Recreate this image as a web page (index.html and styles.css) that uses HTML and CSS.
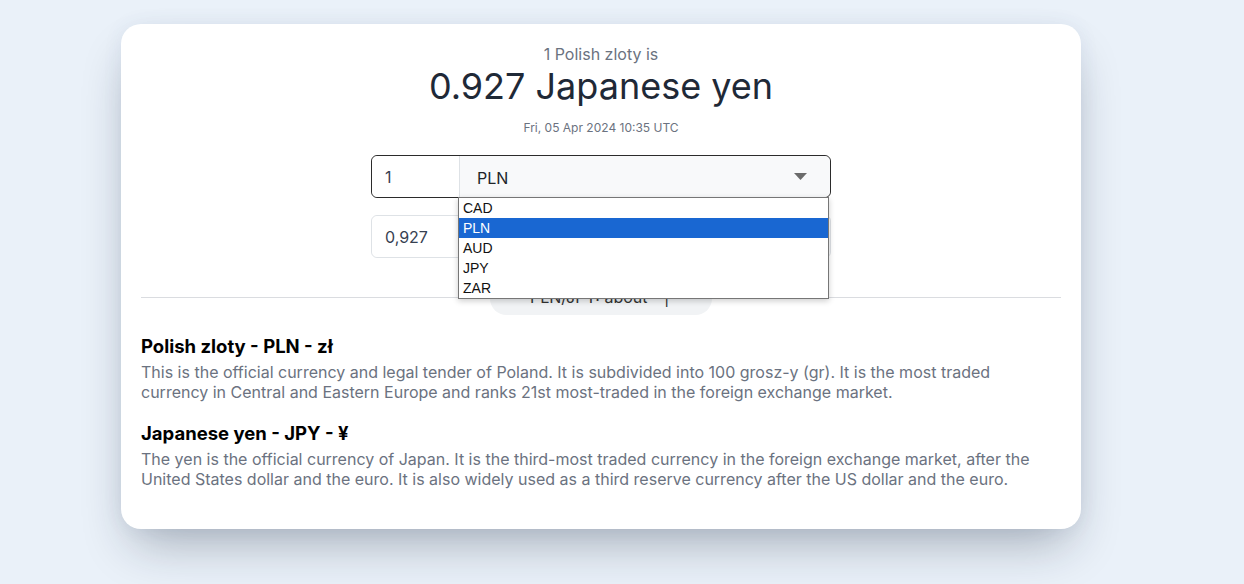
FILE: index.html
```html
<!DOCTYPE html>
<html lang="en">
<head>
<meta charset="utf-8">
<title>PLN to JPY</title>
<link rel="stylesheet" href="styles.css">
</head>
<body>
<div class="page">
  <div class="card">
    <div class="summary">
      <p class="lead">1 Polish zloty is</p>
      <h1 class="result">0.927 Japanese yen</h1>
      <p class="date">Fri, 05 Apr 2024 10:35 UTC</p>
    </div>
    <div class="converter">
      <div class="group group-active">
        <div class="amount">1</div>
        <div class="select">
          <span>PLN</span>
          <svg class="caret" width="13" height="7" viewBox="0 0 13 7"><path d="M0 0h13L6.5 7z" fill="#6b6b6b"/></svg>
        </div>
        <ul class="options">
          <li>CAD</li>
          <li class="selected">PLN</li>
          <li>AUD</li>
          <li>JPY</li>
          <li>ZAR</li>
        </ul>
      </div>
      <div class="group">
        <div class="amount">0,927</div>
        <div class="select">
          <span>JPY</span>
          <svg class="caret" width="13" height="7" viewBox="0 0 13 7"><path d="M0 0h13L6.5 7z" fill="#6b6b6b"/></svg>
        </div>
      </div>
    </div>
    <div class="divider">
      <div class="pill">PLN/JPY: about <span class="bar">|</span></div>
    </div>
    <section class="info">
      <h2>Polish zloty - PLN - zł</h2>
      <p>This is the official currency and legal tender of Poland. It is subdivided into 100 grosz-y (gr). It is the most traded currency in Central and Eastern Europe and ranks 21st most-traded in the foreign exchange market.</p>
      <h2 class="second">Japanese yen - JPY - ¥</h2>
      <p>The yen is the official currency of Japan. It is the third-most traded currency in the foreign exchange market, after the United States dollar and the euro. It is also widely used as a third reserve currency after the US dollar and the euro.</p>
    </section>
  </div>
</div>
</body>
</html>
```

FILE: styles.css
```css
* { box-sizing: border-box; }
html, body { margin: 0; padding: 0; }
body {
  background: #eaf1f9;
  font-family: Inter, "Noto Sans", sans-serif;
  color: #1f2937;
  width: 1244px;
  height: 584px;
  overflow: hidden;
}
.page {
  padding: 24px 0 0 121px;
}
.card {
  width: 960px;
  background: #fff;
  border-radius: 20px;
  padding: 18px 20px 40px;
  box-shadow: 0 25px 50px -12px rgba(20, 30, 50, 0.32), 0 0 20px rgba(60, 90, 140, 0.07);
}
.summary { text-align: center; }
.lead {
  margin: 0;
  font-size: 16px;
  line-height: 24px;
  color: #6b7280;
}
.result {
  margin: 0;
  font-size: 36px;
  line-height: 40px;
  font-weight: 400;
  color: #1f2937;
}
.date {
  margin: 14px 0 0;
  font-size: 12px;
  line-height: 16px;
  color: #6b7280;
}
.converter {
  margin: 19px auto 0;
  width: 460px;
  display: flex;
  flex-direction: column;
  gap: 17px;
}
.group {
  position: relative;
  display: flex;
  height: 43px;
  border: 1px solid #dee2e6;
  border-radius: 6px;
  font-size: 16px;
}
.group-active { border-color: #2b2b2b; }
.amount {
  width: 87px;
  padding-left: 13px;
  display: flex;
  align-items: center;
  color: #374151;
  background: #fff;
  border-radius: 6px 0 0 6px;
}
.select {
  flex: 1;
  display: flex;
  align-items: center;
  justify-content: space-between;
  padding: 2px 23px 0 17px;
  background: #f8f9fa;
  border-left: 1px solid #dee2e6;
  border-radius: 0 6px 6px 0;
  color: #212529;
}
.caret { margin-top: -2px; }
.options {
  position: absolute;
  left: 86px;
  top: 41px;
  width: 371px;
  margin: 0;
  padding: 0;
  list-style: none;
  background: #fff;
  border: 1px solid #767676;
  box-shadow: 0 2px 6px rgba(0, 0, 0, 0.2);
  font-family: "Liberation Sans", Arial, sans-serif;
  font-size: 14px;
  z-index: 5;
}
.options li {
  height: 20px;
  line-height: 20px;
  padding-left: 4px;
  color: #111;
}
.options li.selected {
  background: #1967d2;
  color: #fff;
}
.divider {
  position: relative;
  margin-top: 39px;
  border-top: 1px solid #dadce0;
  height: 0;
}
.pill {
  position: absolute;
  left: 349px;
  top: -16px;
  width: 222px;
  height: 33px;
  border-radius: 17px;
  background: #f1f3f5;
  font-size: 16px;
  line-height: 31px;
  padding-left: 40px;
  color: #333;
}
.pill .bar { margin-left: 12px; }
.info { margin-top: 36px; }
.info h2 {
  margin: 0;
  font-size: 18.5px;
  line-height: 24px;
  font-weight: 700;
  color: #000;
}
.info h2.second { margin-top: 19px; }
.info p {
  margin: 4px 0 0;
  font-size: 16px;
  line-height: 20px;
  color: #6b7280;
}
```
